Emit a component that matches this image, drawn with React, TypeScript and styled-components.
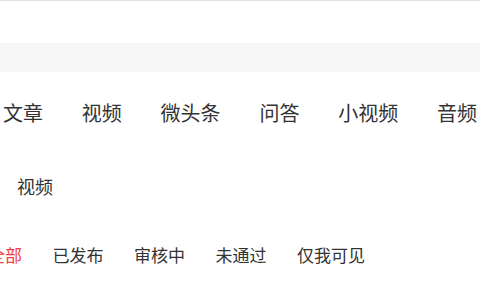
import React from "react";
import styled, { createGlobalStyle } from "styled-components";

const Global = createGlobalStyle`
  html, body { margin: 0; padding: 0; background: #fff; }
  body { font-family: "Noto Sans CJK SC", "Noto Sans", sans-serif; overflow: hidden; }
`;

const Page = styled.div`
  width: 480px;
  height: 300px;
  overflow: hidden;
  display: flex;
  flex-direction: column;
`;

const TopLine = styled.div`
  height: 1px;
  background: #e0e0e0;
`;

const Header = styled.div`
  height: 42px;
`;

const SearchBand = styled.div`
  height: 29px;
  background: #f7f7f7;
`;

const TypeTabs = styled.nav`
  display: flex;
  gap: 38.8px;
  height: 28px;
  margin-top: 27px;
  padding-left: 3px;
  align-items: center;
`;

const TypeTab = styled.span`
  font-size: 20px;
  line-height: 28px;
  color: #333;
  white-space: nowrap;
`;

const SubRow = styled.div`
  display: flex;
  height: 24px;
  margin-top: 47px;
  padding-left: 17px;
  align-items: center;
`;

const SubTag = styled.span`
  font-size: 18px;
  line-height: 24px;
  color: #333;
`;

const StatusRow = styled.div`
  display: flex;
  gap: 30.5px;
  height: 24px;
  margin-top: 45px;
  margin-left: -12px;
  align-items: center;
`;

const Status = styled.span<{ $active?: boolean }>`
  font-size: 17px;
  line-height: 24px;
  color: ${(p) => (p.$active ? "#f04142" : "#333")};
  white-space: nowrap;
`;

const tabs = ["文章", "视频", "微头条", "问答", "小视频", "音频"];
const statuses = ["全部", "已发布", "审核中", "未通过", "仅我可见"];

export default function App() {
  return (
    <Page>
      <Global />
      <TopLine />
      <Header />
      <SearchBand />
      <TypeTabs>
        {tabs.map((t) => (
          <TypeTab key={t}>{t}</TypeTab>
        ))}
      </TypeTabs>
      <SubRow>
        <SubTag>视频</SubTag>
      </SubRow>
      <StatusRow>
        {statuses.map((s, i) => (
          <Status key={s} $active={i === 0}>
            {s}
          </Status>
        ))}
      </StatusRow>
    </Page>
  );
}
